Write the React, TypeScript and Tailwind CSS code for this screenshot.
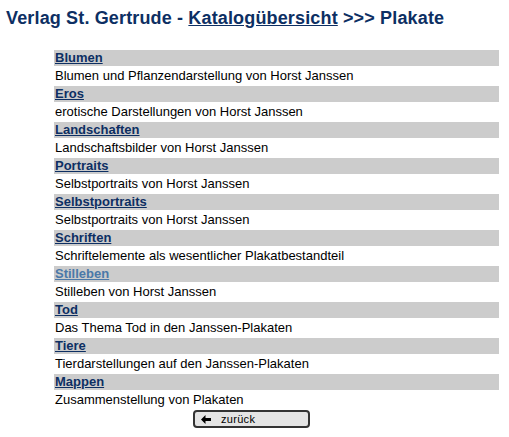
import React from "react";

const categories = [
  { title: "Blumen", text: "Blumen und Pflanzendarstellung von Horst Janssen" },
  { title: "Eros", text: "erotische Darstellungen von Horst Janssen" },
  { title: "Landschaften", text: "Landschaftsbilder von Horst Janssen" },
  { title: "Portraits", text: "Selbstportraits von Horst Janssen" },
  { title: "Selbstportraits", text: "Selbstportraits von Horst Janssen" },
  { title: "Schriften", text: "Schriftelemente als wesentlicher Plakatbestandteil" },
  { title: "Stilleben", text: "Stilleben von Horst Janssen", visited: true },
  { title: "Tod", text: "Das Thema Tod in den Janssen-Plakaten" },
  { title: "Tiere", text: "Tierdarstellungen auf den Janssen-Plakaten" },
  { title: "Mappen", text: "Zusammenstellung von Plakaten" },
];

export default function App() {
  return (
    <div className="w-[509px] h-[437px] bg-white font-['Liberation_Sans',Arial,sans-serif] text-black">
      <h1 className="pl-[6px] pt-[8px] text-[18px] tracking-[0.15px] leading-[20px] font-bold text-[#0d2f63]">
        Verlag St. Gertrude -{" "}
        <a href="#" className="underline">
          Katalogübersicht
        </a>{" "}
        &gt;&gt;&gt; Plakate
      </h1>

      <div className="ml-[54px] mt-[22px] w-[445px] flex flex-col gap-[2px] text-[13px] leading-4">
        {categories.map((c) => (
          <React.Fragment key={c.title}>
            <div className="h-4 bg-[#cccccc] pl-[1px]">
              <a
                href="#"
                className={
                  c.visited
                    ? "font-bold underline text-[#4a78a8]"
                    : "font-bold underline text-[#0d2f63]"
                }
              >
                {c.title}
              </a>
            </div>
            <div className="h-4 pl-[1px]">{c.text}</div>
          </React.Fragment>
        ))}
        <div className="pl-[139px]">
          <button className="flex items-center w-[117px] h-[18px] rounded-[4px] border-2 border-[#333333] bg-[#e4e4e4] pl-[6px] text-[11px] tracking-[0.3px] leading-none">
            <svg width="10" height="9" viewBox="0 0 10 9" className="mr-[10px]">
              <path d="M0 4.5 L4.5 0 V3 H10 V6 H4.5 V9 Z" fill="#000" />
            </svg>
            zurück
          </button>
        </div>
      </div>
    </div>
  );
}
